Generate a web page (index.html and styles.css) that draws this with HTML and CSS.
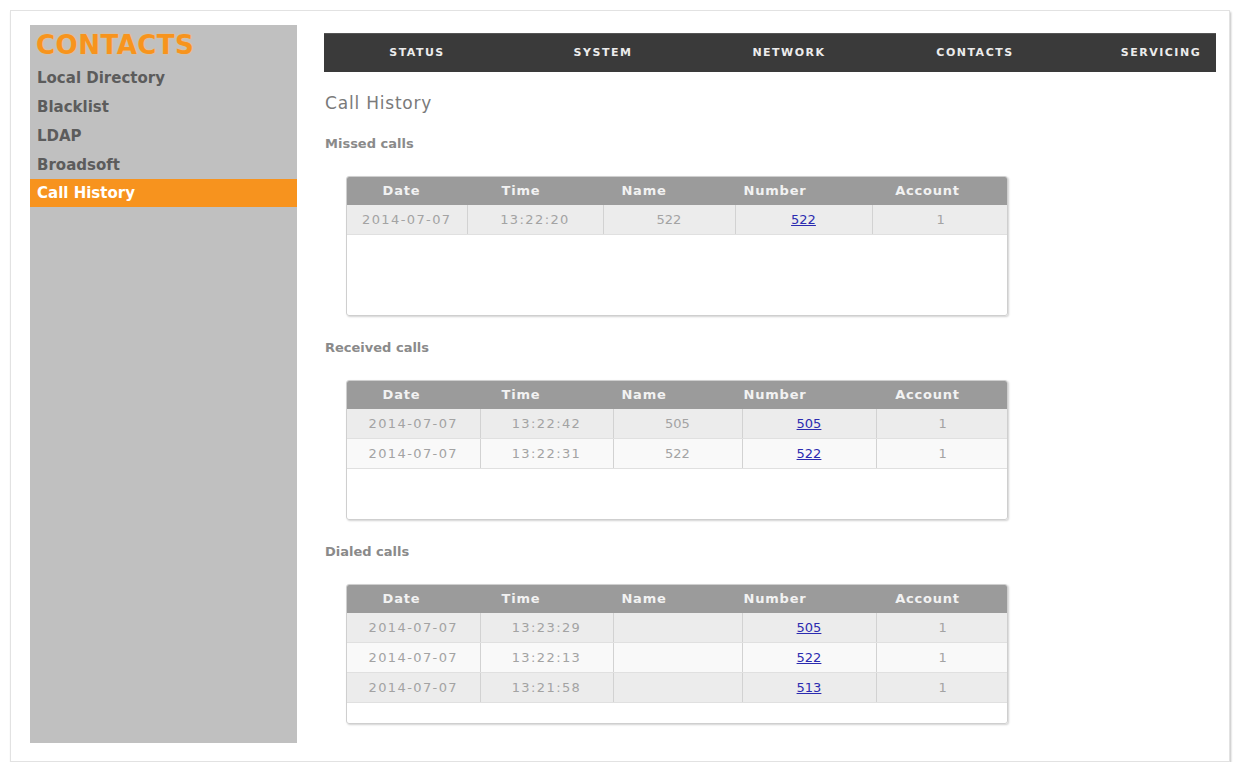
FILE: index.html
```html
<!DOCTYPE html>
<html>
  <head>
    <meta charset="utf-8">
    <title>Contacts - Call History</title>
    <link rel="stylesheet" href="styles.css">
  </head>
  <body>
    <div class="frame">
      <aside class="sidebar">
        <h1>CONTACTS</h1>
        <ul class="menu">
          <li><a href="#">Local Directory</a></li>
          <li><a href="#">Blacklist</a></li>
          <li><a href="#">LDAP</a></li>
          <li><a href="#">Broadsoft</a></li>
          <li class="active"><a href="#">Call History</a></li>
        </ul>
      </aside>

      <main class="content">
        <nav class="topnav">
          <a href="#">STATUS</a>
          <a href="#">SYSTEM</a>
          <a href="#">NETWORK</a>
          <a href="#">CONTACTS</a>
          <a href="#">SERVICING</a>
        </nav>

        <h2>Call History</h2>

        <!-- Missed -->
        <h3>Missed calls</h3>
        <div class="table-box">
          <div class="thead">
            <span>Date</span><span>Time</span><span>Name</span><span>Number</span><span>Account</span>
          </div>
          <table class="calls">
            <colgroup><col width="120"><col width="136"><col width="132"><col width="137"><col width="137"></colgroup>
            <tr><td>2014-07-07</td><td>13:22:20</td><td class="name">522</td><td class="num"><a href="#">522</a></td><td class="name">1</td></tr>
          </table>
        </div>

        <!-- Received -->
        <h3>Received calls</h3>
        <div class="table-box">
          <div class="thead">
            <span>Date</span><span>Time</span><span>Name</span><span>Number</span><span>Account</span>
          </div>
          <table class="calls">
            <colgroup><col width="133"><col width="133"><col width="129"><col width="134"><col width="133"></colgroup>
            <tr><td>2014-07-07</td><td>13:22:42</td><td class="name">505</td><td class="num"><a href="#">505</a></td><td class="name">1</td></tr>
            <tr><td>2014-07-07</td><td>13:22:31</td><td class="name">522</td><td class="num"><a href="#">522</a></td><td class="name">1</td></tr>
          </table>
        </div>

        <!-- Dialed -->
        <h3>Dialed calls</h3>
        <div class="table-box">
          <div class="thead">
            <span>Date</span><span>Time</span><span>Name</span><span>Number</span><span>Account</span>
          </div>
          <table class="calls">
            <colgroup><col width="133"><col width="133"><col width="129"><col width="134"><col width="133"></colgroup>
            <tr><td>2014-07-07</td><td>13:23:29</td><td class="name"></td><td class="num"><a href="#">505</a></td><td class="name">1</td></tr>
            <tr><td>2014-07-07</td><td>13:22:13</td><td class="name"></td><td class="num"><a href="#">522</a></td><td class="name">1</td></tr>
            <tr><td>2014-07-07</td><td>13:21:58</td><td class="name"></td><td class="num"><a href="#">513</a></td><td class="name">1</td></tr>
          </table>
        </div>
      </main>
    </div>
  </body>
</html>
```

FILE: styles.css
```css
body {
  margin: 0;
  background-color: #ffffff;
  font-family: 'DejaVu Sans', Verdana, sans-serif;
}

.frame {
  display: flex;
  margin: 10px 0 0 10px;
  width: 1220px;
  height: 752px;
  box-sizing: border-box;
  padding: 14px 0 0 19px;
  border: 1px solid #e2e2e2;
  box-shadow: 1px 2px 2px rgba(0, 0, 0, 0.25);
  background-color: #fff;
  overflow: hidden;
}

/* left column */
.sidebar {
  flex: 0 0 267px;
  height: 718px;
  background-color: #c0c0c0;
}

.sidebar h1 {
  margin: 5px 0 0 6px;
  font-size: 26px;
  line-height: 30px;
  letter-spacing: 0.5px;
  color: #f7941d;
  text-shadow: 0 0 2px #fbc27a;
}

.menu {
  list-style: none;
  margin: 3px 0 0;
  padding: 0;
}

.menu li {
  height: 29px;
  line-height: 29px;
  padding-left: 7px;
}

.menu a {
  color: #5c5c5c;
  font-weight: bold;
  font-size: 15px;
  text-decoration: none;
}

.menu li.active {
  background-color: #f7931e;
  height: 28px;
  line-height: 28px;
}

.menu li.active a {
  color: #fff;
}

/* right column */
.content {
  flex: 1;
  margin-left: 27px;
  padding-top: 8px;
}

.topnav {
  display: flex;
  width: 892px;
  height: 39px;
  background-color: #3a3a3a;
  border-top: 1px solid #555;
  box-sizing: border-box;
  overflow: hidden;
}

.topnav a {
  flex: 0 0 186px;
  text-align: center;
  line-height: 37px;
  color: #ececec;
  font-size: 11px;
  font-weight: bold;
  letter-spacing: 1.5px;
  text-decoration: none;
}

.content h2 {
  margin: 21px 0 0 1px;
  font-size: 17px;
  line-height: 20px;
  font-weight: normal;
  letter-spacing: 0.8px;
  color: #7a7a7a;
}

.content h3 {
  margin: 21px 0 0 1px;
  font-size: 13px;
  line-height: 20px;
  color: #8a8a8a;
}

.table-box {
  margin: 22px 0 0 22px;
  width: 662px;
  height: 140px;
  box-sizing: border-box;
  border: 1px solid #cfcfcf;
  border-radius: 3px;
  box-shadow: 1px 1px 2px rgba(0, 0, 0, 0.18);
  overflow: hidden;
}

.table-box + h3 {
  margin-top: 22px;
}

.thead {
  display: grid;
  grid-template-columns: 109px 130px 116px 146px 1fr;
  height: 28px;
  line-height: 28px;
  background-color: #9b9b9b;
  color: #f2f2f2;
  font-size: 13px;
  font-weight: bold;
  letter-spacing: 0.8px;
  text-align: center;
}

.calls {
  width: 660px;
  border-collapse: collapse;
  table-layout: fixed;
}

.calls td {
  height: 29px;
  padding: 0;
  text-align: center;
  font-size: 13px;
  letter-spacing: 1.4px;
  color: #a3a3a3;
  border-right: 1px solid #d2d2d2;
  border-bottom: 1px solid #e0e0e0;
}

.calls td:last-child {
  border-right: none;
}

.calls tr:nth-child(odd) td {
  background-color: #ececec;
}

.calls tr:nth-child(even) td {
  background-color: #f9f9f9;
}

.calls td.name {
  letter-spacing: 0;
}

.calls td.num a {
  color: #2b2bb0;
  letter-spacing: 0;
}
```
